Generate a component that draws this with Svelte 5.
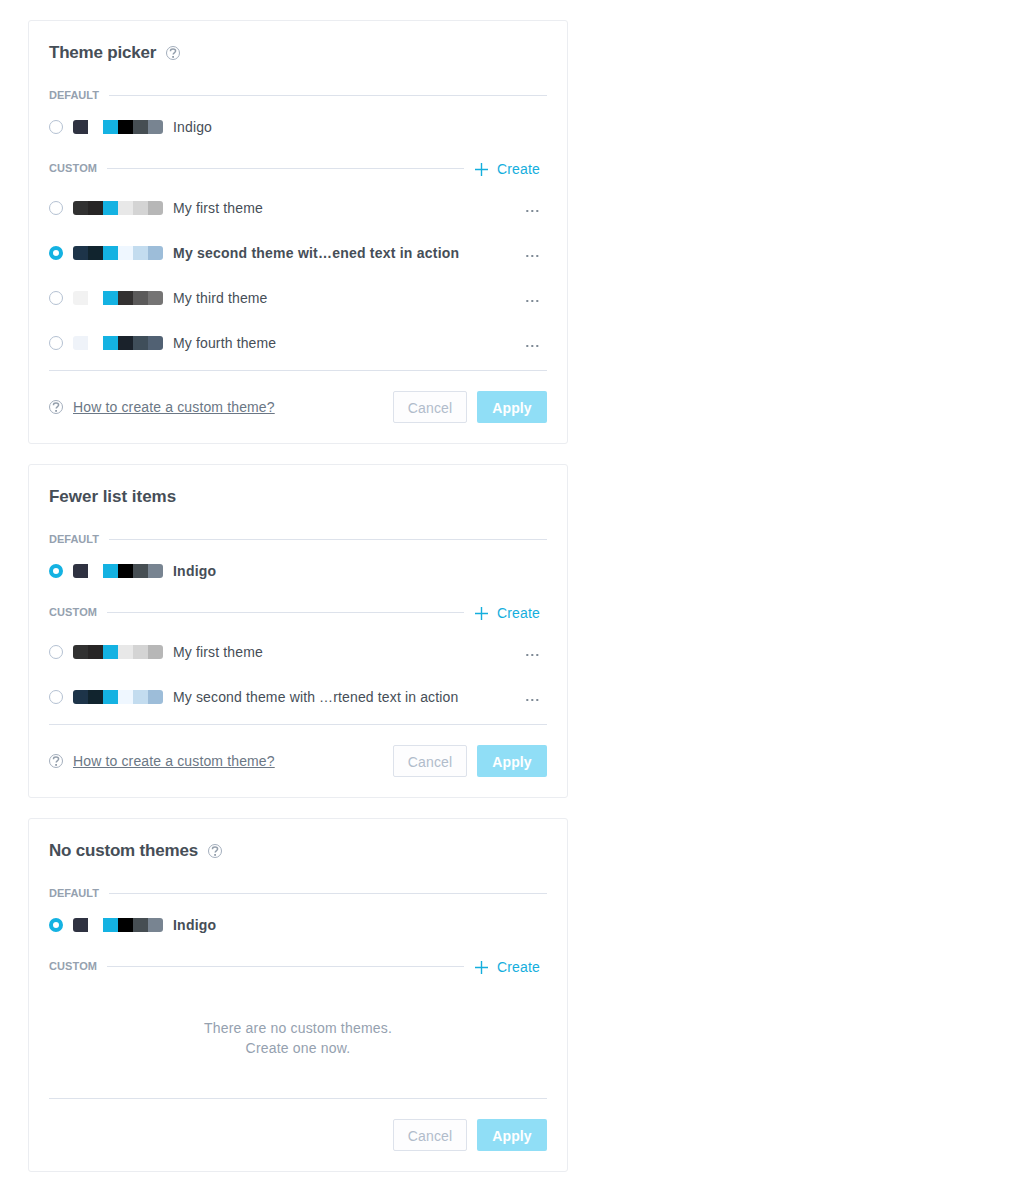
<script>
  const indigo = { name: 'Indigo', colors: ['#2f3241', '#ffffff', '#14b2e2', '#000000', '#464e53', '#788491'] };
  const first = { name: 'My first theme', colors: ['#313131', '#272525', '#14b2e2', '#e8e8e8', '#d4d4d4', '#b7b7b7'] };
  const secondColors = ['#1d3449', '#11242e', '#14b2e2', '#eff7ff', '#c3dcef', '#9dbdd9'];
  const third = { name: 'My third theme', colors: ['#f2f2f2', '#ffffff', '#14b2e2', '#333131', '#5b5a5a', '#757474'] };
  const fourth = { name: 'My fourth theme', colors: ['#eff3f9', '#ffffff', '#14b2e2', '#1a222b', '#3f4e5a', '#516173'] };

  const pickers = [
    {
      title: 'Theme picker',
      help: true,
      link: true,
      defaults: [indigo],
      custom: [first, { name: 'My second theme wit…ened text in action', colors: secondColors, checked: true }, third, fourth],
    },
    {
      title: 'Fewer list items',
      help: false,
      link: true,
      defaults: [{ ...indigo, checked: true }],
      custom: [first, { name: 'My second theme with …rtened text in action', colors: secondColors }],
    },
    {
      title: 'No custom themes',
      help: true,
      link: false,
      defaults: [{ ...indigo, checked: true }],
      custom: [],
    },
  ];
</script>

{#snippet helpIcon()}
  <svg class="help" width="14" height="14" viewBox="0 0 14 14" fill="none">
    <circle cx="7" cy="7" r="6.5" stroke="#a3aebc" />
    <path d="M4.500 5.200V4.800C4.500 3.500 5.600 3.100 7 3.100s2.600.5 2.600 1.900C9.600 6.600 7.200 6.500 7.200 8.600" stroke="#939eab" stroke-width="1.5" />
    <rect x="6.200" y="10" width="1.800" height="1.800" fill="#939eab" />
  </svg>
{/snippet}

{#snippet themeRow(theme, menu)}
  <div class="row">
    <span class="radio" class:checked={theme.checked}></span>
    <span class="palette">
      {#each theme.colors as color}
        <span style:background={color}></span>
      {/each}
    </span>
    <span class="name" class:selected={theme.checked}>{theme.name}</span>
    {#if menu}
      <svg class="dots" width="14" height="4" viewBox="0 0 14 4">
        <rect x="0.300" y="1" width="2" height="2" />
        <rect x="5.300" y="1" width="2" height="2" />
        <rect x="10.300" y="1" width="2" height="2" />
      </svg>
    {/if}
  </div>
{/snippet}

<main>
  {#each pickers as picker}
    <section class="card">
      <header>
        <h2 class:with-help={picker.help}>{picker.title}</h2>
        {#if picker.help}{@render helpIcon()}{/if}
      </header>
      <div class="group default"><span class="label">DEFAULT</span><i></i></div>
      {#each picker.defaults as theme}
        {@render themeRow(theme, false)}
      {/each}
      <div class="group custom">
        <span class="label">CUSTOM</span><i></i>
        <button class="create">
          <svg width="13" height="13" viewBox="0 0 13 13">
            <path d="M6.500 0v13M0 6.500h13" stroke="#14aedd" stroke-width="1.400" />
          </svg>
          <span>Create</span>
        </button>
      </div>
      {#if picker.custom.length}
        <div class="list">
          {#each picker.custom as theme}
            {@render themeRow(theme, true)}
          {/each}
        </div>
      {:else}
        <p class="empty">There are no custom themes.<br />Create one now.</p>
      {/if}
      <footer>
        {#if picker.link}
          {@render helpIcon()}
          <a href="#help">How to create a custom theme?</a>
        {/if}
        <button class="cancel">Cancel</button>
        <button class="apply">Apply</button>
      </footer>
    </section>
  {/each}
</main>

<style>
  :global(body) {
    background: #fff;
  }
  main {
    display: flex;
    flex-direction: column;
    gap: 20px;
    width: 540px;
    padding: 20px 28px;
    font: 14px/20px "Liberation Sans", Arial, sans-serif;
    letter-spacing: 0.14px;
    color: #464e57;
  }
  .card {
    box-sizing: border-box;
    padding: 20px;
    border: 1px solid #ebedf1;
    border-radius: 3px;
  }
  header {
    display: flex;
    align-items: center;
    gap: 10px;
    height: 24px;
  }
  h2 {
    margin: 0;
    font-size: 17px;
    line-height: 24px;
    letter-spacing: -0.03px;
  }
  .with-help {
    letter-spacing: -0.2px;
  }
  svg {
    display: block;
    flex: none;
  }
  .group {
    display: flex;
    align-items: center;
  }
  .group i {
    flex: 1;
    height: 1px;
    margin-left: 10px;
    background: #dde2eb;
  }
  .label {
    font-size: 11px;
    line-height: 15px;
    font-weight: bold;
    letter-spacing: 0;
    color: #95a1af;
  }
  .default {
    height: 15px;
    margin: 23px 0 7px;
  }
  .custom {
    height: 33px;
    margin-top: 8px;
  }
  .custom .label {
    letter-spacing: 0.1px;
  }
  button {
    box-sizing: border-box;
    padding: 0;
    border: 0;
    background: none;
    font: inherit;
    letter-spacing: inherit;
  }
  .create {
    display: flex;
    align-items: center;
    gap: 9px;
    margin: 2px 7px 0 11px;
    color: #14aedd;
  }
  .create span {
    width: 43px;
    margin-top: -1px;
    text-align: left;
  }
  .row {
    display: flex;
    align-items: center;
    height: 34px;
  }
  .list {
    display: grid;
    gap: 11px;
    padding: 6px 0 10px;
  }
  .radio {
    box-sizing: border-box;
    width: 14px;
    height: 14px;
    border: 1px solid #b4c1d2;
    border-radius: 50%;
  }
  .radio.checked {
    border: 4px solid #14b2e2;
  }
  .palette {
    display: flex;
    width: 90px;
    height: 14px;
    margin: 0 10px;
    border-radius: 3px;
    overflow: hidden;
  }
  .palette span {
    flex: 1;
  }
  .name {
    flex: 1;
  }
  .selected {
    font-weight: bold;
    letter-spacing: 0.22px;
  }
  .dots {
    margin: 6px 7px 0 0;
    fill: #7f8a96;
  }
  .empty {
    margin: 0;
    padding: 35px 0 40px;
    text-align: center;
    letter-spacing: 0.19px;
    color: #95a1af;
  }
  footer {
    display: flex;
    align-items: center;
    gap: 10px;
    padding-top: 20px;
    border-top: 1px solid #dde2eb;
  }
  a {
    color: #6b7785;
    text-decoration: underline;
  }
  .cancel,
  .apply {
    height: 32px;
    padding-top: 2px;
    border-radius: 2px;
  }
  .cancel {
    width: 74px;
    margin-left: auto;
    border: 1px solid #dde2eb;
    background: #fdfdfe;
    color: #b1bccb;
  }
  .apply {
    width: 70px;
    background: #90def6;
    color: #fff;
    font-weight: bold;
  }
</style>
